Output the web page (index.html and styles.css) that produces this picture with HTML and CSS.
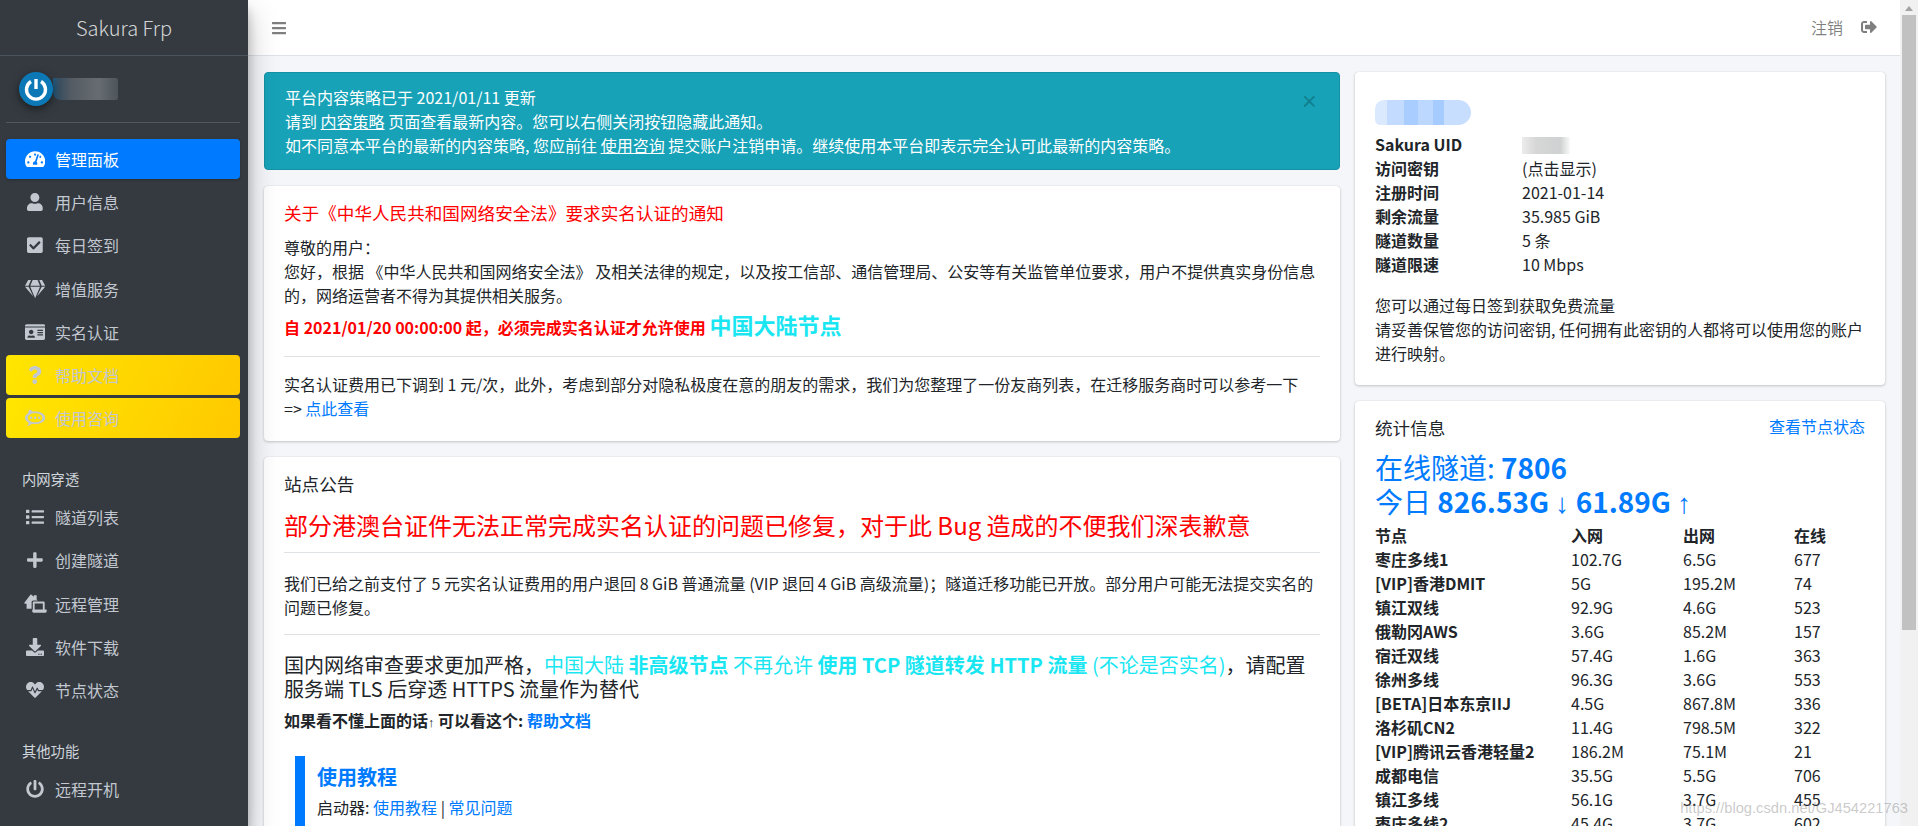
FILE: index.html
```html
<!DOCTYPE html>
<html lang="zh-CN">
<head>
<meta charset="utf-8">
<title>Sakura Frp</title>
<link rel="stylesheet" href="styles.css">
</head>
<body>
<div class="app">
  <aside class="sidebar">
    <div class="brand">Sakura Frp</div>
    <div class="user-panel">
      <svg class="avatar" viewBox="0 0 34 34"><circle cx="17" cy="17" r="17" fill="#0c79b6"/><path d="M12 9.5a9.5 9.5 0 1 0 10 0" fill="none" stroke="#fff" stroke-width="3.4"/><path d="M17 7v10" stroke="#fff" stroke-width="3.4"/></svg>
      <div class="user-blur"></div>
    </div>
    <nav class="nav">
      <a class="nav-item active"><span class="nav-icon"><svg viewBox="0 0 576 512"><path d="M288 32C128.94 32 0 160.94 0 320c0 52.8 14.25 102.26 39.06 144.8 5.61 9.62 16.3 15.2 27.44 15.2h443c11.14 0 21.83-5.58 27.44-15.2C561.75 422.26 576 372.8 576 320c0-159.06-128.94-288-288-288zm0 64c14.71 0 26.58 10.13 30.32 23.65-1.11 2.26-2.64 4.23-3.45 6.67l-9.22 27.67c-5.13 3.49-10.97 6.01-17.64 6.01-17.67 0-32-14.33-32-32S270.33 96 288 96zM96 384c-17.67 0-32-14.33-32-32s14.33-32 32-32 32 14.33 32 32-14.33 32-32 32zm48-160c-17.67 0-32-14.33-32-32s14.33-32 32-32 32 14.33 32 32-14.33 32-32 32zm246.77-72.41l-61.33 184C343.13 347.33 352 364.54 352 384c0 11.72-3.38 22.55-8.88 32H232.88c-5.5-9.45-8.88-20.28-8.88-32 0-33.94 26.5-61.43 59.9-63.59l61.34-184.01c4.17-12.56 17.73-19.45 30.36-15.17 12.57 4.19 19.35 17.79 15.17 30.36zm14.66 57.2l15.52-46.55c3.47-1.29 7.13-2.23 11.05-2.23 17.67 0 32 14.33 32 32s-14.33 32-32 32c-11.38-.01-20.89-6.28-26.57-15.22zM480 384c-17.67 0-32-14.33-32-32s14.33-32 32-32 32 14.33 32 32-14.33 32-32 32z"/></svg></span>管理面板</a>
      <a class="nav-item"><span class="nav-icon"><svg viewBox="0 0 448 512"><path d="M224 256c70.7 0 128-57.3 128-128S294.7 0 224 0 96 57.3 96 128s57.3 128 128 128zm89.6 32h-16.7c-22.2 10.2-46.9 16-72.9 16s-50.6-5.8-72.9-16h-16.7C60.2 288 0 348.2 0 422.4V464c0 26.5 21.5 48 48 48h352c26.5 0 48-21.5 48-48v-41.6c0-74.2-60.2-134.4-134.4-134.4z"/></svg></span>用户信息</a>
      <a class="nav-item"><span class="nav-icon"><svg viewBox="0 0 448 512"><path d="M400 480H48c-26.51 0-48-21.49-48-48V80c0-26.51 21.49-48 48-48h352c26.51 0 48 21.49 48 48v352c0 26.51-21.49 48-48 48zm-204.686-98.059l184-184c6.248-6.248 6.248-16.379 0-22.627l-22.627-22.627c-6.248-6.248-16.379-6.249-22.628 0L184 302.745l-70.059-70.059c-6.248-6.248-16.379-6.248-22.628 0l-22.627 22.627c-6.248 6.248-6.248 16.379 0 22.627l104 104c6.249 6.25 16.379 6.25 22.628.001z"/></svg></span>每日签到</a>
      <a class="nav-item"><span class="nav-icon"><svg viewBox="0 0 576 512"><path d="M485.5 0L576 160H474.9L405.7 0h79.8zm-128 0l69.2 160H149.3L218.5 0h139zm-267 0h79.8l-69.2 160H0L90.5 0zM0 192h100.7l123 251.7c1.5 3.1-2.7 5.9-5 3.3L0 192zm148.2 0h279.6l-137 318.2c-1 2.4-4.5 2.4-5.5 0L148.2 192zm204.1 251.7l123-251.7H576L357.3 446.9c-2.3 2.7-6.5-.1-5-3.2z"/></svg></span>增值服务</a>
      <a class="nav-item"><span class="nav-icon"><svg viewBox="0 0 576 512"><path d="M528 32H48C21.5 32 0 53.5 0 80v16h576V80c0-26.5-21.5-48-48-48zM0 432c0 26.5 21.5 48 48 48h480c26.5 0 48-21.5 48-48V128H0v304zm352-232c0-4.4 3.6-8 8-8h144c4.4 0 8 3.6 8 8v16c0 4.4-3.6 8-8 8H360c-4.4 0-8-3.6-8-8v-16zm0 64c0-4.4 3.6-8 8-8h144c4.4 0 8 3.6 8 8v16c0 4.4-3.6 8-8 8H360c-4.4 0-8-3.6-8-8v-16zm0 64c0-4.4 3.6-8 8-8h144c4.4 0 8 3.6 8 8v16c0 4.4-3.6 8-8 8H360c-4.4 0-8-3.6-8-8v-16zM176 192c35.3 0 64 28.7 64 64s-28.7 64-64 64-64-28.7-64-64 28.7-64 64-64zM67.1 396.2C75.5 370.5 99.6 352 128 352h8.2c12.3 5.1 25.7 8 39.8 8s27.6-2.9 39.8-8h8.2c28.4 0 52.5 18.5 60.9 44.2 3.2 9.9-5.2 19.8-15.6 19.8H82.7c-10.4 0-18.8-10-15.6-19.8z"/></svg></span>实名认证</a>
      <a class="nav-item gold"><span class="nav-icon"><svg viewBox="0 0 384 512"><path d="M202.021 0C122.202 0 70.503 32.703 29.914 91.026c-7.363 10.58-5.093 25.086 5.178 32.874l43.138 32.709c10.373 7.865 25.132 6.026 33.253-4.148 25.049-31.381 43.63-49.449 82.757-49.449 30.764 0 68.816 19.799 68.816 49.631 0 22.552-18.617 34.134-48.993 51.164-35.423 19.86-82.299 44.576-82.299 106.405V320c0 13.255 10.745 24 24 24h72.471c13.255 0 24-10.745 24-24v-5.773c0-42.86 125.268-44.645 125.268-160.627C377.504 66.256 286.902 0 202.021 0zM192 373.459c-38.196 0-69.271 31.075-69.271 69.271 0 38.195 31.075 69.27 69.271 69.27s69.271-31.075 69.271-69.271-31.075-69.27-69.271-69.27z"/></svg></span>帮助文档</a>
      <a class="nav-item gold"><span class="nav-icon"><svg viewBox="0 0 576 512"><path fill-rule="evenodd" d="M120 24c50 8 84 30 104 54 22-4 42-6 64-6 150 0 288 76 288 178S438 428 288 428c-34 0-66-4-94-12-32 34-84 64-134 68 26-26 42-58 44-92C42 354 0 304 0 250c0-56 40-104 96-134 0-34 8-64 24-92zM288 120C176 120 80 176 80 250s96 130 208 130 208-56 208-130-96-130-208-130zM176 214a36 36 0 1 1 0 72 36 36 0 0 1 0-72zm112 0a36 36 0 1 1 0 72 36 36 0 0 1 0-72zm112 0a36 36 0 1 1 0 72 36 36 0 0 1 0-72z"/></svg></span>使用咨询</a>
    </nav>
    <div class="nav-header">内网穿透</div>
    <nav class="nav">
      <a class="nav-item"><span class="nav-icon"><svg viewBox="0 0 512 512"><path d="M80 368H16a16 16 0 0 0-16 16v64a16 16 0 0 0 16 16h64a16 16 0 0 0 16-16v-64a16 16 0 0 0-16-16zm0-320H16A16 16 0 0 0 0 64v64a16 16 0 0 0 16 16h64a16 16 0 0 0 16-16V64a16 16 0 0 0-16-16zm0 160H16a16 16 0 0 0-16 16v64a16 16 0 0 0 16 16h64a16 16 0 0 0 16-16v-64a16 16 0 0 0-16-16zm416 176H176a16 16 0 0 0-16 16v32a16 16 0 0 0 16 16h320a16 16 0 0 0 16-16v-32a16 16 0 0 0-16-16zm0-320H176a16 16 0 0 0-16 16v32a16 16 0 0 0 16 16h320a16 16 0 0 0 16-16V80a16 16 0 0 0-16-16zm0 160H176a16 16 0 0 0-16 16v32a16 16 0 0 0 16 16h320a16 16 0 0 0 16-16v-32a16 16 0 0 0-16-16z"/></svg></span>隧道列表</a>
      <a class="nav-item"><span class="nav-icon"><svg viewBox="0 0 448 512"><path d="M416 208H272V64c0-17.67-14.33-32-32-32h-32c-17.67 0-32 14.33-32 32v144H32c-17.67 0-32 14.33-32 32v32c0 17.67 14.33 32 32 32h144v144c0 17.67 14.33 32 32 32h32c17.67 0 32-14.33 32-32V304h144c17.67 0 32-14.33 32-32v-32c0-17.67-14.33-32-32-32z"/></svg></span>创建隧道</a>
      <a class="nav-item"><span class="nav-icon"><svg class="wide" viewBox="0 0 640 512"><path fill-rule="evenodd" d="M200 20c8-7 20-7 28 0l60 54V44c0-7 5-12 12-12h56c7 0 12 5 12 12v102l30 27H280c-27 0-48 21-48 48v176H112c-9 0-16-7-16-16V260H52c-15 0-22-18-11-28L200 20zM296 204h256c18 0 32 14 32 32v184h40c9 0 16 7 16 16v20c0 27-21 48-48 48H296c-27 0-48-21-48-48v-20c0-9 7-16 16-16h0V236c0-18 14-32 32-32zm18 50v166h220V254H314z"/></svg></span>远程管理</a>
      <a class="nav-item"><span class="nav-icon"><svg viewBox="0 0 512 512"><path d="M216 0h80c13.3 0 24 10.7 24 24v168h87.7c17.8 0 26.7 21.5 14.1 34.1L269.7 378.3c-7.5 7.5-19.8 7.5-27.3 0L90.1 226.1c-12.6-12.6-3.7-34.1 14.1-34.1H192V24c0-13.3 10.7-24 24-24zm296 376v112c0 13.3-10.7 24-24 24H24c-13.3 0-24-10.7-24-24V376c0-13.3 10.7-24 24-24h146.7l49 49c20.1 20.1 52.5 20.1 72.6 0l49-49H488c13.3 0 24 10.7 24 24zm-124 88c0-11-9-20-20-20s-20 9-20 20 9 20 20 20 20-9 20-20zm64 0c0-11-9-20-20-20s-20 9-20 20 9 20 20 20 20-9 20-20z"/></svg></span>软件下载</a>
      <a class="nav-item"><span class="nav-icon"><svg viewBox="0 0 512 512"><path d="M320.2 243.8l-49.7 99.4c-6 12.1-23.4 11.7-28.9-.6l-56.9-126.3-30 71.7H60.6l182.5 186.5c7.1 7.3 18.6 7.3 25.7 0L451.4 288H342.3l-22.1-44.2zM473.7 73.9l-2.4-2.5c-51.5-52.6-135.8-52.6-187.4 0L256 100l-27.9-28.5c-51.5-52.7-135.9-52.7-187.4 0l-2.4 2.4C-10.4 123.7-12.5 203 31 256h102.4l35.9-86.2c5.4-12.9 23.6-13.2 29.4-.4l58.2 129.3 49-97.9c5.9-11.8 22.7-11.8 28.6 0l27.6 55.2H481c43.5-53 41.4-132.3-7.3-182.1z"/></svg></span>节点状态</a>
    </nav>
    <div class="nav-header">其他功能</div>
    <nav class="nav">
      <a class="nav-item"><span class="nav-icon"><svg viewBox="0 0 512 512"><path d="M400 54.1c63 45 104 118.6 104 201.9 0 136.8-110.8 247.7-247.5 248C120 504.3 8.2 393 8 256.4 7.9 173.1 48.9 99.3 111.8 54.2c11.7-8.3 28-4.8 35 7.7L162.6 90c5.9 10.5 3.1 23.8-6.6 31-41.5 30.8-68 79.6-68 134.9-.1 92.3 74.5 168.1 168 168.1 91.6 0 168.6-74.2 168-169.1-.3-51.8-24.7-101.8-68.1-134-9.7-7.2-12.4-20.5-6.5-30.9l15.8-28.1c7-12.4 23.2-16.1 35-7.8zM296 264V24c0-13.3-10.7-24-24-24h-32c-13.3 0-24 10.7-24 24v240c0 13.3 10.7 24 24 24h32c13.3 0 24-10.7 24-24z"/></svg></span>远程开机</a>
    </nav>
  </aside>

  <div class="main">
    <header class="topbar">
      <svg class="bars" viewBox="0 0 448 512"><path d="M16 132h416c8.837 0 16-7.163 16-16V76c0-8.837-7.163-16-16-16H16C7.163 60 0 67.163 0 76v40c0 8.837 7.163 16 16 16zm0 160h416c8.837 0 16-7.163 16-16v-40c0-8.837-7.163-16-16-16H16c-8.837 0-16 7.163-16 16v40c0 8.837 7.163 16 16 16zm0 160h416c8.837 0 16-7.163 16-16v-40c0-8.837-7.163-16-16-16H16c-8.837 0-16 7.163-16 16v40c0 8.837 7.163 16 16 16z"/></svg>
      <div class="logout">注销<svg viewBox="0 0 512 512"><path d="M497 273L329 441c-15 15-41 4.5-41-17v-96H152c-13.3 0-24-10.7-24-24v-96c0-13.3 10.7-24 24-24h136V88c0-21.4 25.9-32 41-17l168 168c9.3 9.4 9.3 24.6 0 34zM192 436v-40c0-6.6-5.4-12-12-12H96c-17.7 0-32-14.3-32-32V160c0-17.7 14.3-32 32-32h84c6.6 0 12-5.4 12-12V76c0-6.6-5.4-12-12-12H96c-53 0-96 43-96 96v192c0 53 43 96 96 96h84c6.6 0 12-5.4 12-12z"/></svg></div>
    </header>
    <div class="content">
      <div class="col">
        <div class="alert">
          <span class="alert-close">×</span>
          平台内容策略已于 2021/01/11 更新<br>
          请到 <a>内容策略</a> 页面查看最新内容。您可以右侧关闭按钮隐藏此通知。<br>
          如不同意本平台的最新的内容策略, 您应前往 <a>使用咨询</a> 提交账户注销申请。继续使用本平台即表示完全认可此最新的内容策略。
        </div>
        <section class="card notice">
          <h3 class="card-title red">关于《中华人民共和国网络安全法》要求实名认证的通知</h3>
          <p>尊敬的用户&#xFF1A;<br>您好&#xFF0C;根据 《中华人民共和国网络安全法》 及相关法律的规定&#xFF0C;以及按工信部、通信管理局、公安等有关监管单位要求&#xFF0C;用户不提供真实身份信息的&#xFF0C;网络运营者不得为其提供相关服务。</p>
          <p class="deadline"><b class="red">自 2021/01/20 00:00:00 起&#xFF0C;必须完成实名认证才允许使用</b> <b class="cyan big">中国大陆节点</b></p>
          <hr class="rule-a">
          <p>实名认证费用已下调到 1 元/次&#xFF0C;此外&#xFF0C;考虑到部分对隐私极度在意的朋友的需求&#xFF0C;我们为您整理了一份友商列表&#xFF0C;在迁移服务商时可以参考一下<br>=&gt; <a class="link">点此查看</a></p>
        </section>
        <section class="card notice">
          <h3 class="card-title">站点公告</h3>
          <h4 class="headline red">部分港澳台证件无法正常完成实名认证的问题已修复&#xFF0C;对于此 Bug 造成的不便我们深表歉意</h4>
          <hr class="rule-b">
          <p>我们已给之前支付了 5 元实名认证费用的用户退回 8 GiB 普通流量 (VIP 退回 4 GiB 高级流量)&#xFF1B;隧道迁移功能已开放。部分用户可能无法提交实名的问题已修复。</p>
          <hr class="rule-c">
          <h5 class="subhead">国内网络审查要求更加严格&#xFF0C;<span class="cyan">中国大陆 <b>非高级节点</b> 不再允许 <b>使用 TCP 隧道转发 HTTP 流量</b> (不论是否实名)</span>&#xFF0C;请配置服务端 TLS 后穿透 HTTPS 流量作为替代</h5>
          <p><b>如果看不懂上面的话<span class="arrow">↑</span> 可以看这个: <a class="link">帮助文档</a></b></p>
          <div class="callout">
            <h5 class="callout-title">使用教程</h5>
            <p>启动器: <a class="link">使用教程</a> | <a class="link">常见问题</a></p>
          </div>
        </section>
      </div>
      <div class="col">
        <section class="card account">
          <div class="name-blur"></div>
          <table class="kv">
            <tr><th>Sakura UID</th><td><div class="uid-blur"></div></td></tr>
            <tr><th>访问密钥</th><td>(点击显示)</td></tr>
            <tr><th>注册时间</th><td>2021-01-14</td></tr>
            <tr><th>剩余流量</th><td>35.985 GiB</td></tr>
            <tr><th>隧道数量</th><td>5 条</td></tr>
            <tr><th>隧道限速</th><td>10 Mbps</td></tr>
          </table>
          <p>您可以通过每日签到获取免费流量<br>请妥善保管您的访问密钥, 任何拥有此密钥的人都将可以使用您的账户进行映射。</p>
        </section>
        <section class="card stats">
          <div class="stats-head"><h3 class="card-title">统计信息</h3><a class="link">查看节点状态</a></div>
          <h3 class="online">在线隧道: <b>7806</b><br>今日 <b>826.53G</b> <span class="arrow">↓</span> <b>61.89G</b> <span class="arrow">↑</span></h3>
          <table class="nodes">
            <colgroup><col class="c1"><col class="c2"><col class="c3"><col></colgroup>
            <tr><th>节点</th><th>入网</th><th>出网</th><th>在线</th></tr>
            <tr><th>枣庄多线1</th><td>102.7G</td><td>6.5G</td><td>677</td></tr>
            <tr><th>[VIP]香港DMIT</th><td>5G</td><td>195.2M</td><td>74</td></tr>
            <tr><th>镇江双线</th><td>92.9G</td><td>4.6G</td><td>523</td></tr>
            <tr><th>俄勒冈AWS</th><td>3.6G</td><td>85.2M</td><td>157</td></tr>
            <tr><th>宿迁双线</th><td>57.4G</td><td>1.6G</td><td>363</td></tr>
            <tr><th>徐州多线</th><td>96.3G</td><td>3.6G</td><td>553</td></tr>
            <tr><th>[BETA]日本东京IIJ</th><td>4.5G</td><td>867.8M</td><td>336</td></tr>
            <tr><th>洛杉矶CN2</th><td>11.4G</td><td>798.5M</td><td>322</td></tr>
            <tr><th>[VIP]腾讯云香港轻量2</th><td>186.2M</td><td>75.1M</td><td>21</td></tr>
            <tr><th>成都电信</th><td>35.5G</td><td>5.5G</td><td>706</td></tr>
            <tr><th>镇江多线</th><td>56.1G</td><td>3.7G</td><td>455</td></tr>
            <tr><th>枣庄多线2</th><td>45.4G</td><td>3.7G</td><td>602</td></tr>
          </table>
        </section>
      </div>
    </div>
  </div>
  <div class="scrollbar"><div class="scroll-up"></div><div class="scroll-thumb"></div></div>
  <div class="watermark">https://blog.csdn.net/GJ454221763</div>
</div>
</body>
</html>
```
FILE: styles.css
```css
* { box-sizing: border-box; }
html, body { margin: 0; height: 100%; overflow: hidden; }
body {
  font-family: "Noto Sans CJK SC", "Noto Sans", sans-serif;
  font-size: 16px;
  line-height: 24px;
  color: #212529;
  background: #f4f6f9;
}
p, h3, h4, h5 { margin: 0; font-weight: 400; }
a { text-decoration: none; }
.link { color: #007bff; }
.red { color: #f00; }
.cyan { color: #1ae6f2; }
.arrow { font-family: "Liberation Sans", sans-serif; font-weight: 400; font-size: .8em; line-height: 0; }

.app { display: flex; height: 826px; overflow: hidden; position: relative; }

/* sidebar */
.sidebar {
  flex: 0 0 248px;
  height: 826px;
  background: #343a40;
  color: #c2c7d0;
  z-index: 2;
  box-shadow: 0 14px 28px rgba(0,0,0,.25), 0 10px 10px rgba(0,0,0,.22);
  padding: 0 8px 0 6px;
}
.brand {
  height: 56px;
  margin: 0 -8px 0 -6px;
  border-bottom: 1px solid #4b545c;
  text-align: center;
  font-size: 20px;
  font-weight: 300;
  line-height: 56px;
  color: rgba(255,255,255,.8);
}
.user-panel {
  display: flex;
  align-items: center;
  height: 67px;
  padding: 0 0 0 13px;
  border-bottom: 1px solid #4f5962;
  margin-bottom: 16px;
}
.avatar { width: 34px; height: 34px; flex: none; filter: drop-shadow(0 3px 4px rgba(0,0,0,.5)); }
.user-blur {
  width: 65px; height: 22px;
  background: linear-gradient(90deg, #1f5a80 0, #3a4f60 10%, #565c63 30%, #666c72 70%, #4e545b 100%);
  border-radius: 0 2px 2px 8px;
}
.nav { display: block; }
.nav-item {
  display: flex;
  align-items: center;
  height: 40px;
  margin-bottom: 3.2px;
  padding-left: 16px;
  border-radius: 4px;
  color: #c2c7d0;
}
.nav-item.active { background: #007bff; color: #fff; box-shadow: 0 1px 3px rgba(0,0,0,.2); }
.nav-item.gold { background: linear-gradient(120deg, #ffe600, #ffc800); }
.nav-icon { flex: 0 0 26px; margin-right: 7px; display: flex; align-items: center; justify-content: center; }
.nav-icon svg { height: 18px; width: auto; fill: currentColor; display: block; }
.nav-icon svg.wide { height: 19px; }
.nav-header {
  margin-top: 30px;
  margin-bottom: 7px;
  padding-left: 16px;
  font-size: 14.3px;
  line-height: 22px;
  color: #d0d4db;
}

/* main */
.main { flex: 1 1 0; min-width: 0; height: 826px; overflow: hidden; }
.topbar {
  height: 56px;
  background: #fff;
  border-bottom: 1px solid #dee2e6;
  display: flex;
  align-items: center;
  justify-content: space-between;
  padding: 0 23px 0 24px;
}
.bars { width: 14px; height: 16px; fill: rgba(0,0,0,.5); }
.logout { display: flex; align-items: center; color: rgba(0,0,0,.5); padding-bottom: 2px; }
.logout svg { width: 16px; height: 16px; margin-left: 18px; fill: rgba(0,0,0,.5); }
.content {
  display: grid;
  grid-template-columns: 1076fr 530fr;
  column-gap: 15px;
  padding: 16px 15px 0 16px;
  align-items: start;
}
.col { display: flex; flex-direction: column; gap: 16px; min-width: 0; }
.alert {
  position: relative;
  height: 98px;
  padding: 12px 20px;
  background: #17a2b8;
  border: 1px solid #1591a5;
  border-radius: 4px;
  color: #fff;
}
.alert a { color: #fff; text-decoration: underline; }
.alert-close {
  position: absolute;
  top: 16px; right: 22px;
  font-family: "Liberation Sans", sans-serif;
  font-size: 26px;
  line-height: 24px;
  font-weight: 400;
  color: rgba(0,0,0,.22);
}
.card {
  background: #fff;
  border-radius: 4px;
  box-shadow: 0 0 1px rgba(0,0,0,.125), 0 1px 3px rgba(0,0,0,.2);
}
.card-title { font-size: 17.6px; line-height: 21px; font-weight: 400; }
.notice { padding: 16px 20px 21px; }
.notice > .card-title { margin-bottom: 12px; }
.deadline { line-height: 33px; margin-top: 1px; }
.big { font-size: 22px; }
.notice hr { border: 0; border-top: 1px solid #dfe2e5; margin: 0; }
.rule-a { margin: 12px 0 15px !important; }
.rule-b { margin: 13px 0 18px !important; }
.rule-c { margin: 15px 0 18px !important; }
.headline { font-size: 24px; line-height: 29px; margin-top: 16px; }
.subhead { font-size: 20px; line-height: 24px; margin-bottom: 7px; }
.callout { margin: 24px 0 0 11px; padding: 9px 12px 9px 12px; border-left: 10px solid #007bff; }
.callout-title { font-size: 20px; line-height: 24px; font-weight: 700; color: #007bff; margin-bottom: 6px; }

/* right */
.account { padding: 28px 20px 18px; height: 313px; }
.name-blur {
  width: 96px; height: 25px; margin-bottom: 7px;
  border-radius: 10px 14px 14px 6px;
  background: linear-gradient(90deg, #dbe9ff 0 12%, #c3dbff 12% 30%, #a9cdff 30% 45%, #bcd8ff 45% 60%, #a5cbff 60% 72%, #c8deff 72% 100%);
}
.uid-blur {
  width: 48px; height: 17px; margin-top: 2px;
  background: linear-gradient(90deg, #ececec 0, #d6d6d6 30%, #cfd2d2 80%, #fafafa 100%);
}
table { border-collapse: collapse; }
th, td { padding: 0; text-align: left; vertical-align: middle; height: 24px; }
th { font-weight: 700; }
.kv th { width: 147px; }
.account p { margin-top: 17px; }
.stats { padding: 16px 20px 20px; }
.stats-head { display: flex; justify-content: space-between; align-items: flex-start; height: 26px; margin-top: 0; }
.stats-head .link { margin-top: -3px; }
.online { font-size: 28px; line-height: 33.6px; color: #007bff; margin: 8px 0 5px; font-weight: 400; }
.online .arrow { font-size: 1em; }
.nodes { table-layout: fixed; width: 490px; }
.c1 { width: 196px; }
.c2 { width: 112px; }
.c3 { width: 111px; }

/* browser chrome */
.scrollbar { flex: 0 0 18px; height: 826px; background: #f1f1f1; padding: 0 2px; position: relative; z-index: 3; }
.scroll-up {
  width: 0; height: 0; margin: 6px auto 4px;
  border: 4px solid transparent; border-top: 0; border-bottom: 5px solid #a3a3a3;
}
.scroll-thumb { height: 615px; margin-top: 2px; background: #c1c1c1; }
.watermark {
  position: absolute;
  right: 10px; bottom: 9px;
  font-family: "Liberation Sans", sans-serif;
  font-size: 14.7px;
  line-height: 18px;
  color: rgba(120,120,120,.4);
  z-index: 4;
}
```
